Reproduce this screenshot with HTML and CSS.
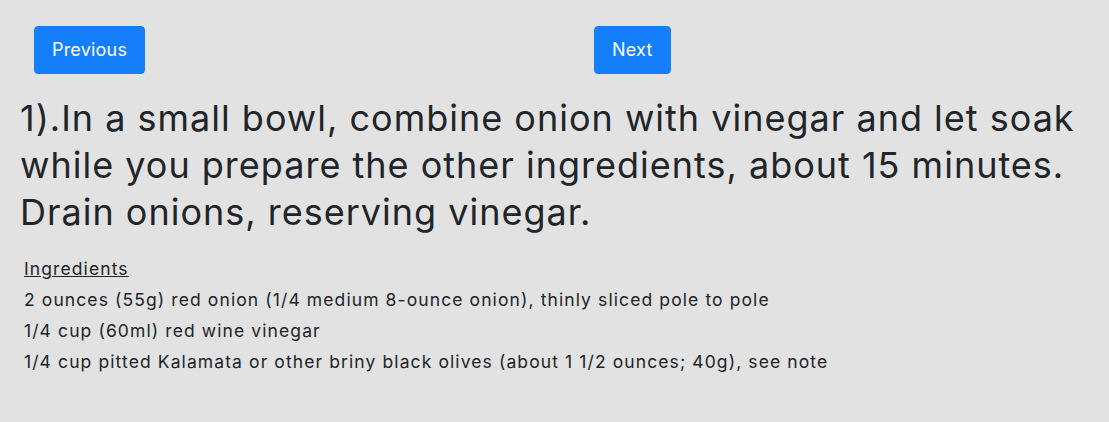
FILE: index.html
```html
<!DOCTYPE html>
<html>
<head>
<meta charset="utf-8">
<link rel="stylesheet" href="styles.css">
</head>
<body>
<div class="page">
  <div class="nav">
    <div class="nav-col"><button class="btn">Previous</button></div>
    <div class="nav-col"><button class="btn">Next</button></div>
  </div>
  <h1 class="step">1).In a small bowl, combine onion with vinegar and let soak while you prepare the other ingredients, about 15 minutes. Drain onions, reserving vinegar.</h1>
  <div class="ingredients">
    <div class="ing-title">Ingredients</div>
    <div class="ing">2 ounces (55g) red onion (1/4 medium 8-ounce onion), thinly sliced pole to pole</div>
    <div class="ing">1/4 cup (60ml) red wine vinegar</div>
    <div class="ing">1/4 cup pitted Kalamata or other briny black olives (about 1 1/2 ounces; 40g), see note</div>
  </div>
</div>
</body>
</html>
```
FILE: styles.css
```css
html, body {
  margin: 0;
  padding: 0;
  background: #e2e2e2;
}
body {
  font-family: Inter, "Liberation Sans", Arial, sans-serif;
  color: #212529;
}
.page {
  padding: 26px 20px 0 20px;
}
.nav {
  display: grid;
  grid-template-columns: 560px 1fr;
  padding-left: 14px;
}
.btn {
  font-family: Inter, "Liberation Sans", Arial, sans-serif;
  font-size: 18px;
  line-height: 28px;
  letter-spacing: 0.2px;
  padding: 9px 17px;
  color: #fff;
  background: #157efb;
  border: 1px solid #157efb;
  border-radius: 4px;
}
.step {
  margin: 21px 0 0 0;
  font-size: 36px;
  font-weight: 400;
  line-height: 47px;
  letter-spacing: 1px;
}
.ingredients {
  margin-top: 17px;
  padding-left: 4px;
  font-size: 17.5px;
  line-height: 31px;
  letter-spacing: 1.1px;
}
.ing-title {
  text-decoration: underline;
}
```
